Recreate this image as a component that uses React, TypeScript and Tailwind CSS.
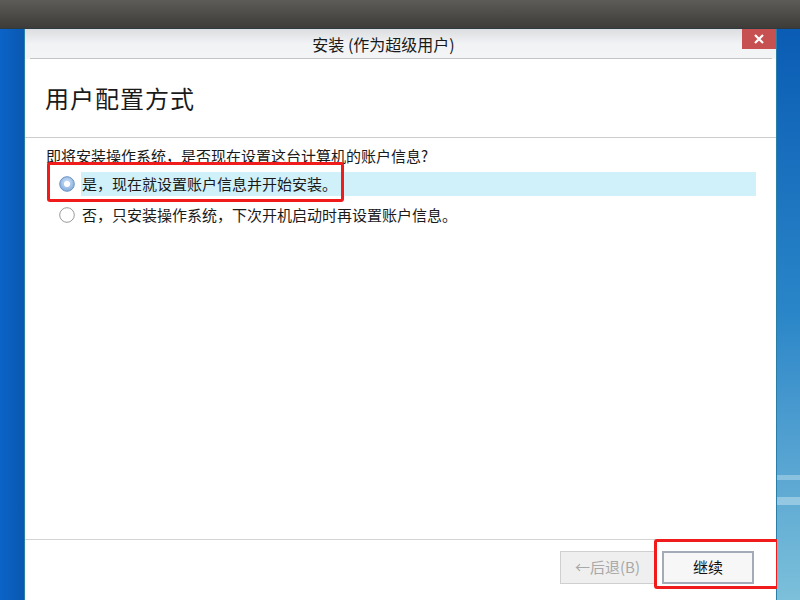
import React from "react";

const font = { fontFamily: '"Noto Sans CJK SC", "Noto Sans", sans-serif' };

function RadioOn() {
  return (
    <svg width="16" height="16" viewBox="0 0 16 16">
      <defs>
        <radialGradient id="rg" cx="50%" cy="40%" r="60%">
          <stop offset="0%" stopColor="#d6e8fa" />
          <stop offset="100%" stopColor="#7fa9dc" />
        </radialGradient>
      </defs>
      <circle cx="8" cy="8" r="7.3" fill="url(#rg)" stroke="#6f94c4" strokeWidth="1" />
      <circle cx="8" cy="8" r="3" fill="#ffffff" />
    </svg>
  );
}

function RadioOff() {
  return (
    <svg width="16" height="16" viewBox="0 0 16 16">
      <circle cx="8" cy="8" r="7.3" fill="#ffffff" stroke="#9a9a9a" strokeWidth="1" />
    </svg>
  );
}

export default function App() {
  return (
    <div className="w-[800px] h-[600px] flex flex-col overflow-hidden" style={font}>
      <div className="h-[29px] bg-gradient-to-b from-[#5d5c58] to-[#3d3c38] border-b border-[#2d3a40]" />
      <div className="flex flex-1 min-h-0">
        <div className="w-[24px] bg-gradient-to-r from-[#0b63c8] to-[#0a58b0]" />
        <div className="flex-1 flex flex-col bg-white border-l border-r border-[#2a7fa8] relative">
          <div className="h-[30px] bg-gradient-to-b from-[#dcdde0] via-[#f2f3f5] to-[#f3f4f6] relative flex items-center justify-center pr-[34px]">
            <span className="text-[16px] text-[#1a1a1a]">安装 (作为超级用户)</span>
            <div className="absolute right-0 top-0 w-[34px] h-[20px] bg-[#c75050] flex items-center justify-center">
              <svg width="10" height="10" viewBox="0 0 10 10">
                <path d="M1 1 L9 9 M9 1 L1 9" stroke="#ffffff" strokeWidth="2.2" />
              </svg>
            </div>
            <div className="absolute left-[5px] right-[4px] bottom-0 h-px bg-[#c4c4c4]" />
          </div>
          <div className="h-[79px] bg-white flex items-center pl-[20px] border-b border-[#cccccc]">
            <span className="text-[24px] text-[#1a1a1a] leading-none tracking-[1px]">用户配置方式</span>
          </div>
          <div className="flex-1 relative pt-[8px] pl-[21px] pr-[20px]">
            <div className="text-[15px] text-[#1a1a1a] leading-[20px]">即将安装操作系统，是否现在设置这台计算机的账户信息?</div>
            <div className="mt-[6px] flex items-center h-[24px]">
              <div className="w-[35px] flex items-center pl-[13px]"><RadioOn /></div>
              <div className="flex-1 h-[24px] bg-[#d0f0fa] flex items-center pl-[1px] text-[15px] text-[#1a1a1a]">是，现在就设置账户信息并开始安装。</div>
            </div>
            <div className="mt-[7px] flex items-center h-[24px]">
              <div className="w-[35px] flex items-center pl-[13px]"><RadioOff /></div>
              <div className="flex-1 pl-[1px] text-[15px] text-[#1a1a1a]">否，只安装操作系统，下次开机启动时再设置账户信息。</div>
            </div>
            <div className="absolute left-[22px] top-[24px] w-[297px] h-[40px] border-[3px] border-[#f01c1c] rounded-[3px]" />
          </div>
          <div className="h-[61px] border-t border-[#d4d4d4] bg-white flex items-start justify-end pr-[22px] pt-[11px] gap-[7px]">
            <div className="w-[95px] h-[33px] border border-[#cfcfcf] bg-[#efefef] flex items-center justify-center text-[15px] text-[#a8a8a8]">←后退(B)</div>
            <div className="w-[92px] h-[33px] border-2 border-[#a3aab8] bg-[#f7f7f7] flex items-center justify-center text-[15px] text-[#111]">继续</div>
          </div>
          <div className="absolute left-[629px] top-[510px] w-[125px] h-[50px] border-[3px] border-[#f01c1c] rounded-[3px]" />
        </div>
        <div className="w-[23px] bg-gradient-to-b from-[#0a5cb4] via-[#2a86c8] to-[#7cc0da] relative overflow-hidden">
          <div className="absolute left-0 top-[446px] w-[23px] h-[5px] bg-[#b8dcec] opacity-50" />
          <div className="absolute left-0 top-[468px] w-[23px] h-[8px] bg-[#c8e4f0] opacity-50" />
        </div>
      </div>
    </div>
  );
}
